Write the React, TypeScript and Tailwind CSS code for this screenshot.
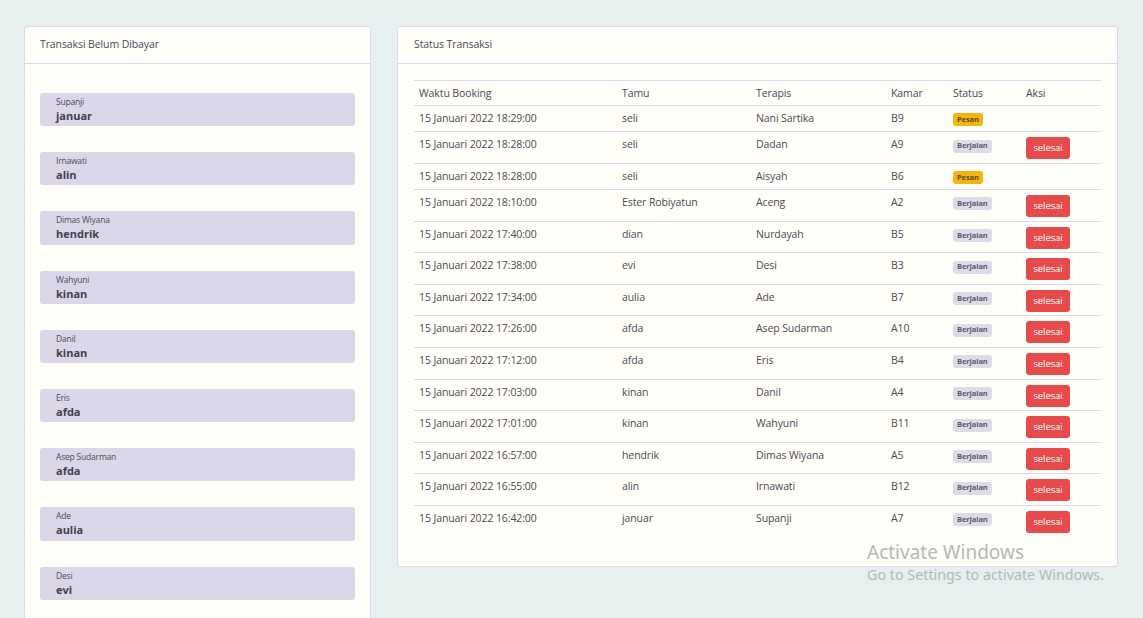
import React from "react";

const unpaid = [
  ["Supanji", "januar"],
  ["Irnawati", "alin"],
  ["Dimas Wiyana", "hendrik"],
  ["Wahyuni", "kinan"],
  ["Danil", "kinan"],
  ["Eris", "afda"],
  ["Asep Sudarman", "afda"],
  ["Ade", "aulia"],
  ["Desi", "evi"],
];

type Row = [string, string, string, string, "Pesan" | "Berjalan"];
const rows: Row[] = [
  ["15 Januari 2022 18:29:00", "seli", "Nani Sartika", "B9", "Pesan"],
  ["15 Januari 2022 18:28:00", "seli", "Dadan", "A9", "Berjalan"],
  ["15 Januari 2022 18:28:00", "seli", "Aisyah", "B6", "Pesan"],
  ["15 Januari 2022 18:10:00", "Ester Robiyatun", "Aceng", "A2", "Berjalan"],
  ["15 Januari 2022 17:40:00", "dian", "Nurdayah", "B5", "Berjalan"],
  ["15 Januari 2022 17:38:00", "evi", "Desi", "B3", "Berjalan"],
  ["15 Januari 2022 17:34:00", "aulia", "Ade", "B7", "Berjalan"],
  ["15 Januari 2022 17:26:00", "afda", "Asep Sudarman", "A10", "Berjalan"],
  ["15 Januari 2022 17:12:00", "afda", "Eris", "B4", "Berjalan"],
  ["15 Januari 2022 17:03:00", "kinan", "Danil", "A4", "Berjalan"],
  ["15 Januari 2022 17:01:00", "kinan", "Wahyuni", "B11", "Berjalan"],
  ["15 Januari 2022 16:57:00", "hendrik", "Dimas Wiyana", "A5", "Berjalan"],
  ["15 Januari 2022 16:55:00", "alin", "Irnawati", "B12", "Berjalan"],
  ["15 Januari 2022 16:42:00", "januar", "Supanji", "A7", "Berjalan"],
];

const td = "px-[5px] pt-[4px] pb-[5px] align-top leading-[16px]";

export default function App() {
  return (
    <div
      className="relative h-[618px] overflow-hidden bg-[#e5f0ef] text-[#4a4b57]"
      style={{ fontFamily: '"Open Sans", "Noto Sans", sans-serif' }}
    >
      <div className="flex items-start gap-[26px] pl-[24px] pr-[25px] pt-[26px]">
        {/* Left card */}
        <div className="w-[347px] shrink-0 rounded-[3px] border border-[#ddd6ef] bg-[#fffef8]">
          <div className="flex h-[37px] items-center border-b border-[#ddd6ef] px-[15px] text-[10.5px] tracking-[-0.1px]">
            Transaksi Belum Dibayar
          </div>
          <div className="flex flex-col gap-[26px] px-[15px] pt-[29px] pb-[40px]">
            {unpaid.map(([a, b], i) => (
              <div
                key={i}
                className="h-[33.2px] rounded-[3px] bg-[#dcd7e8] pl-[16px] pt-[3px]"
              >
                <div className="text-[8.5px] leading-[12px] tracking-[-0.2px]">{a}</div>
                <div className="text-[11px] font-bold leading-[16px] text-[#3f404c]">{b}</div>
              </div>
            ))}
          </div>
        </div>

        {/* Right card */}
        <div className="flex-1 rounded-[3px] border border-[#ddd6ef] bg-[#fffef8]">
          <div className="flex h-[37px] items-center border-b border-[#ddd6ef] px-[16px] text-[10.5px] tracking-[-0.1px]">
            Status Transaksi
          </div>
          <div className="px-[16px] pt-[16px] pb-[29px]">
            <table className="w-full border-collapse text-[10.5px] tracking-[-0.1px]">
              <colgroup>
                <col className="w-[203px]" />
                <col className="w-[134px]" />
                <col className="w-[135px]" />
                <col className="w-[62px]" />
                <col className="w-[73px]" />
                <col />
              </colgroup>
              <thead>
                <tr className="border-t border-b border-[#ddd6ef]">
                  {["Waktu Booking", "Tamu", "Terapis", "Kamar", "Status", "Aksi"].map((h) => (
                    <th
                      key={h}
                      className="px-[5px] pt-[4px] pb-[4px] text-left align-top font-normal leading-[16px]"
                    >
                      {h}
                    </th>
                  ))}
                </tr>
              </thead>
              <tbody>
                {rows.map((r, i) => (
                  <tr
                    key={i}
                    className={i < rows.length - 1 ? "border-b border-[#ddd6ef]" : ""}
                  >
                    <td className={td}>{r[0]}</td>
                    <td className={td}>{r[1]}</td>
                    <td className={td}>{r[2]}</td>
                    <td className={td}>{r[3]}</td>
                    <td className={td}>
                      {r[4] === "Pesan" ? (
                        <span className="mt-[3px] inline-flex h-[13px] items-center rounded-[3px] bg-[#f6b40e] px-[4px] text-[7.5px] font-bold leading-none text-[#5b4a20]">
                          Pesan
                        </span>
                      ) : (
                        <span className="mt-[3px] inline-flex h-[13px] items-center rounded-[3px] bg-[#dddbe8] px-[4px] text-[7.5px] font-bold leading-none text-[#5a5c69]">
                          Berjalan
                        </span>
                      )}
                    </td>
                    <td className="px-[5px] pt-[5px] pb-[3.6px] align-top leading-[16px]">
                      {r[4] === "Berjalan" ? (
                        <span className="flex h-[22px] w-[44px] items-center justify-center rounded-[3px] bg-[#e74a4b] text-[9.5px] text-white">
                          selesai
                        </span>
                      ) : null}
                    </td>
                  </tr>
                ))}
              </tbody>
            </table>
          </div>
        </div>
      </div>

      {/* Windows watermark overlay */}
      <div
        className="pointer-events-none absolute left-[867px] top-[539px] text-[#b5b8b8]"
        style={{ fontFamily: '"Noto Sans", "Open Sans", sans-serif' }}
      >
        <div className="text-[19px] leading-[26px]">Activate Windows</div>
        <div className="text-[14.3px] leading-[20px]">Go to Settings to activate Windows.</div>
      </div>
    </div>
  );
}
